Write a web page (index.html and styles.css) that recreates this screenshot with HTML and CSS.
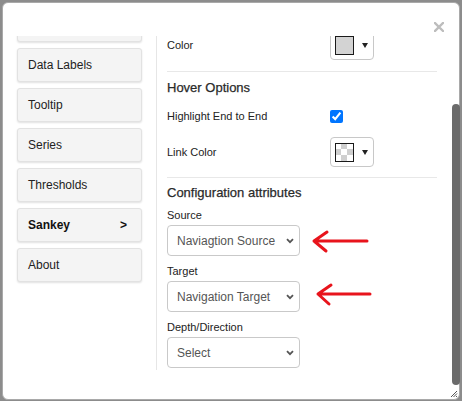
FILE: index.html
```html
<!DOCTYPE html>
<html>
<head>
<meta charset="utf-8">
<link rel="stylesheet" href="styles.css">
</head>
<body>
<div class="dialog">
  <button class="close" aria-label="Close">
    <svg width="10" height="10" viewBox="0 0 10 10"><path d="M1 1 L9 9 M9 1 L1 9" stroke="#bdbdbd" stroke-width="2.4" stroke-linecap="square"/></svg>
  </button>
  <div class="body">
    <nav class="nav">
      <div class="nav-list">
        <div class="nav-item" aria-label="General"></div>
        <div class="nav-item">Data Labels</div>
        <div class="nav-item">Tooltip</div>
        <div class="nav-item">Series</div>
        <div class="nav-item">Thresholds</div>
        <div class="nav-item active"><span>Sankey</span><span>&gt;</span></div>
        <div class="nav-item">About</div>
      </div>
    </nav>
    <section class="panel">
      <div class="panel-inner">
        <div class="row row-first">
          <span class="label">Color</span>
          <div class="picker"><span class="swatch grey"></span><span class="caret"></span></div>
        </div>
        <div class="sep sep-1"></div>
        <h3 class="heading h-hover">Hover Options</h3>
        <div class="row row-check">
          <span class="label">Highlight End to End</span>
          <input type="checkbox" class="check" checked>
        </div>
        <div class="row row-link">
          <span class="label">Link Color</span>
          <div class="picker"><span class="swatch checker"></span><span class="caret"></span></div>
        </div>
        <div class="sep sep-2"></div>
        <h3 class="heading h-config">Configuration attributes</h3>
        <div class="field">
          <label class="flabel">Source</label>
          <div class="select-wrap">
            <select class="select"><option>Naviagtion Source</option></select>
            <svg class="chev" width="8" height="6" viewBox="0 0 8 6"><path d="M1 1.2 L4 4.2 L7 1.2" fill="none" stroke="#555" stroke-width="1.8"/></svg>
          </div>
        </div>
        <div class="field">
          <label class="flabel">Target</label>
          <div class="select-wrap">
            <select class="select"><option>Navigation Target</option></select>
            <svg class="chev" width="8" height="6" viewBox="0 0 8 6"><path d="M1 1.2 L4 4.2 L7 1.2" fill="none" stroke="#555" stroke-width="1.8"/></svg>
          </div>
        </div>
        <div class="field">
          <label class="flabel">Depth/Direction</label>
          <div class="select-wrap">
            <select class="select"><option>Select</option></select>
            <svg class="chev" width="8" height="6" viewBox="0 0 8 6"><path d="M1 1.2 L4 4.2 L7 1.2" fill="none" stroke="#555" stroke-width="1.8"/></svg>
          </div>
        </div>
      </div>
    </section>
  </div>
  <div class="thumb"></div>
  <svg class="grip" width="8" height="8" viewBox="0 0 8 8"><path d="M7 1 L1 7 M7 3.5 L3.5 7 M7 6 L6 7" stroke="#555" stroke-width="1"/></svg>
</div>
<svg class="annot" width="462" height="401" viewBox="0 0 462 401">
  <g fill="none" stroke="#e8141c" stroke-width="3" stroke-linecap="round" stroke-linejoin="round">
    <path d="M314 241 L367 241 M327 232 L314 241 L326 251"/>
    <path d="M318 294 L370 294 M331 285 L318 294 L329 304"/>
  </g>
</svg>
</body>
</html>
```
FILE: styles.css
```css
html, body {
  margin: 0;
  padding: 0;
}
body {
  background: #8c8c8c;
  width: 462px;
  height: 401px;
  overflow: hidden;
  padding: 2px 0 0 2px;
  box-sizing: border-box;
  font-family: "Liberation Sans", Arial, sans-serif;
  color: #222;
}
.dialog {
  position: relative;
  width: 458px;
  height: 398px;
  box-sizing: border-box;
  background: #fff;
  border: 1px solid #a9a9a9;
  border-radius: 6px;
  padding-top: 33px;
}
.close {
  position: absolute;
  top: 19px;
  right: 15px;
  border: 0;
  background: none;
  padding: 0;
  width: 10px;
  height: 10px;
  display: block;
}
.close svg { display: block; }
.body {
  display: flex;
  height: 334px;
}
.nav {
  width: 154px;
  border-right: 1px solid #e6e6e6;
  overflow: hidden;
  padding: 0 14px 0 14px;
  box-sizing: border-box;
  flex: none;
}
.nav-list {
  margin-top: -28px;
  display: flex;
  flex-direction: column;
  gap: 6px;
}
.nav-item {
  height: 34px;
  box-sizing: border-box;
  background: #f4f4f4;
  border: 1px solid #e2e2e2;
  border-radius: 3px;
  box-shadow: 0 1px 2px rgba(0, 0, 0, 0.12);
  font-size: 12px;
  padding: 0 14px 0 10px;
  display: flex;
  align-items: center;
  justify-content: space-between;
  color: #222;
}
.nav-item.active {
  font-weight: bold;
  color: #111;
}
.panel {
  flex: 1;
  overflow: hidden;
  padding: 0 22px 0 10px;
}
.panel-inner {
  margin-top: -6px;
  display: flex;
  flex-direction: column;
}
.row {
  display: flex;
  align-items: center;
  height: 30px;
}
.label {
  width: 163px;
  font-size: 11px;
  color: #222;
}
.row-check { margin-top: 5px; }
.row-link { margin-top: 6px; }
.picker {
  width: 44px;
  height: 30px;
  box-sizing: border-box;
  border: 1px solid #c8c8c8;
  border-radius: 4px;
  display: flex;
  align-items: center;
  padding-left: 4px;
}
.swatch {
  width: 19px;
  height: 19px;
  box-sizing: border-box;
  border: 1px solid #1a1a1a;
}
.swatch.grey { background: #d3d3d3; }
.swatch.checker {
  background-color: #fff;
  background-image: conic-gradient(#cfcfcf 25%, #fff 0 50%, #cfcfcf 0 75%, #fff 0);
  background-size: 12px 12px;
  background-position: -1px -1px;
}
.caret {
  margin-left: 8px;
  width: 0;
  height: 0;
  border-left: 3px solid transparent;
  border-right: 3px solid transparent;
  border-top: 5px solid #222;
}
.check {
  margin: 0;
  width: 13px;
  height: 13px;
  accent-color: #0075ff;
}
.sep {
  border-top: 1px solid #e8e8e8;
  height: 0;
}
.sep-1 { margin-top: 11px; }
.sep-2 { margin-top: 10px; }
.heading {
  margin: 0;
  font-size: 13px;
  font-weight: normal;
  line-height: 16px;
  color: #2a2a2a;
  -webkit-text-stroke: 0.25px #2a2a2a;
}
.h-hover { margin-top: 8px; }
.h-config { margin-top: 7px; }
.field {
  display: flex;
  flex-direction: column;
  margin-top: 7px;
}
.field + .field { margin-top: 8px; }
.flabel {
  font-size: 11px;
  line-height: 14px;
  color: #222;
}
.select-wrap {
  position: relative;
  width: 133px;
  margin-top: 3px;
}
.select {
  -webkit-appearance: none;
  appearance: none;
  width: 133px;
  height: 31px;
  box-sizing: border-box;
  border: 1px solid #c9c9c9;
  border-radius: 4px;
  background: #fff;
  padding: 0 0 0 9px;
  font-family: "Liberation Sans", Arial, sans-serif;
  font-size: 12px;
  color: #555;
  display: block;
  margin: 0;
}
.chev {
  position: absolute;
  right: 6px;
  top: 13px;
  display: block;
}
.thumb {
  position: absolute;
  right: -1px;
  top: 101px;
  width: 8px;
  height: 281px;
  background: #6b6b6b;
  border-radius: 4px;
}
.grip {
  position: absolute;
  right: 1px;
  bottom: 1px;
  display: block;
}
.annot {
  position: absolute;
  left: 0;
  top: 0;
  pointer-events: none;
}
```
